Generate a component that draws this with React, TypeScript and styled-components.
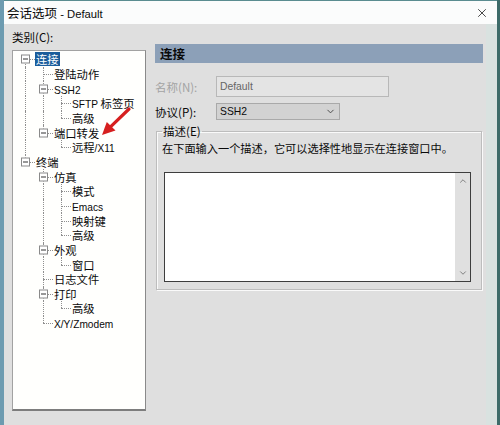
import { FC, ReactNode } from 'react';
import styled, { createGlobalStyle } from 'styled-components';
import { X, ChevronDown, ChevronUp } from 'lucide-react';

const GlobalStyle = createGlobalStyle`
  html, body {
    margin: 0;
    padding: 0;
    background: #dfdfdf;
  }
  body {
    font-family: "Noto Sans CJK SC", "Liberation Sans", sans-serif;
    color: #0a0a0a;
  }
`;

// Latin runs in the original dialog are set in a narrower face than the CJK ones
const Latin = styled.span`
  font-family: "Liberation Sans", Arial, sans-serif;
  font-size: 0.9em;
`;

const mixed = (text: string): ReactNode[] =>
  text
    .split(/([A-Za-z0-9/ \-]+)/)
    .filter(Boolean)
    .map((part, i) => (/^[A-Za-z0-9/ \-]+$/.test(part) ? <Latin key={i}>{part}</Latin> : part));

const Window = styled.div`
  position: relative;
  width: 500px;
  height: 425px;
  box-sizing: border-box;
  display: flex;
  flex-direction: column;
  background: #dfdfdf;
  border-left: 4px solid #6d9bb0;
  border-right: 3px solid #3d6b69;
  overflow: hidden;
`;

const TitleBar = styled.div`
  height: 23px;
  flex: 0 0 23px;
  display: flex;
  align-items: center;
  justify-content: space-between;
  padding: 0 8px 0 3px;
  background: #fbfcfc;
  border-top: 1px solid #5a8c90;
  font-size: 12.5px;
`;

const Main = styled.div`
  flex: 1;
  display: flex;
  gap: 9px;
  padding: 5px 3px 0 8px;
  border-right: 11px solid #d9e2e0;
  min-height: 0;
`;

const LeftColumn = styled.div`
  width: 134px;
  display: flex;
  flex-direction: column;
`;

const FieldLabel = styled.div<{ $disabled?: boolean }>`
  font-size: 11.5px;
  line-height: 16px;
  color: ${({ $disabled }) => ($disabled ? '#a3a3a3' : '#0a0a0a')};
`;

const TreeBox = styled.div`
  margin-top: 5px;
  height: 361px;
  box-sizing: border-box;
  background: #fffffd;
  border: 1px solid #a2a2a2;
  border-bottom: 2px solid #7d7d7d;
  border-right: 1px solid #8a8a8a;
  padding: 1px 0 0 3px;
  font-size: 11.3px;
`;

const TreeRow = styled.div`
  display: flex;
  align-items: center;
  height: 14.67px;
`;

const Cell = styled.span`
  position: relative;
  flex: 0 0 18px;
  align-self: stretch;
`;

const VLine = styled.i<{ $part: 'top' | 'bottom' | 'full' }>`
  position: absolute;
  left: 9px;
  top: ${({ $part }) => ($part === 'bottom' ? '50%' : '0')};
  bottom: ${({ $part }) => ($part === 'top' ? '50%' : '0')};
  border-left: 1px dotted #8f8f8f;
`;

const HLine = styled.i`
  position: absolute;
  left: 9px;
  right: -1px;
  top: 50%;
  border-top: 1px dotted #8f8f8f;
`;

const ExpandBox = styled.i`
  position: absolute;
  left: 5px;
  top: 50%;
  width: 9px;
  height: 9px;
  box-sizing: border-box;
  transform: translateY(-50%);
  background: #fff;
  border: 1px solid #8a8a8a;
  &::after {
    content: '';
    position: absolute;
    left: 1px;
    top: 3px;
    width: 5px;
    height: 1px;
    background: #333;
  }
`;

const NodeLabel = styled.span<{ $selected?: boolean }>`
  display: inline-block;
  height: 14px;
  margin-left: 1px;
  padding: 0 1px;
  line-height: 14px;
  overflow: hidden;
  white-space: nowrap;
  color: ${({ $selected }) => ($selected ? '#fff' : '#0a0a0a')};
  background: ${({ $selected }) => ($selected ? '#1b5d9b' : 'transparent')};
`;

const RightPanel = styled.div`
  width: 328px;
  display: flex;
  flex-direction: column;
  padding-top: 15px;
`;

const PanelHeader = styled.div`
  height: 19px;
  display: flex;
  align-items: center;
  padding-left: 5px;
  background: #8ca0b8;
  font-size: 12.5px;
  font-weight: bold;
`;

const FormRow = styled.div<{ $top: number; $height: number }>`
  display: flex;
  align-items: center;
  margin-top: ${({ $top }) => $top}px;
  height: ${({ $height }) => $height}px;
  > ${FieldLabel} {
    width: 61px;
  }
`;

const TextInput = styled.div`
  width: 173px;
  height: 100%;
  box-sizing: border-box;
  display: flex;
  align-items: center;
  padding-left: 3px;
  background: #e4e4e4;
  border: 1px solid #b8b8b8;
  font-size: 11.5px;
  color: #666;
`;

const Select = styled.div`
  width: 124px;
  height: 100%;
  box-sizing: border-box;
  display: flex;
  align-items: center;
  justify-content: space-between;
  padding: 0 3px 0 3px;
  background: #d2d2d2;
  border: 1px solid #a9a9a9;
  font-size: 11.5px;
  color: #0a0a0a;
`;

const GroupBox = styled.fieldset`
  margin: 4px 1px 0 1px;
  padding: 3px 10px 7px 6px;
  border: 1px solid #bdbdbd;
  box-shadow: inset 1px 1px 0 #fafafa, 1px 1px 0 #fafafa;
  font-size: 11.5px;
`;

const Legend = styled.legend`
  padding: 0 1px;
  margin-left: -1px;
  line-height: 14px;
`;

const Hint = styled.div`
  line-height: 14px;
  font-size: 11.2px;
  white-space: nowrap;
  margin-left: -1px;
`;

const MemoBox = styled.div`
  margin: 17px 0 0 1px;
  height: 110px;
  box-sizing: border-box;
  display: flex;
  background: #fff;
  border: 1px solid #3e3e3e;
`;

const MemoText = styled.div`
  flex: 1;
`;

const ScrollTrack = styled.div`
  width: 15px;
  display: flex;
  flex-direction: column;
  justify-content: space-between;
  align-items: center;
  padding: 3px 0;
  background: #e0e0e0;
  color: #6e6e6e;
`;

const Arrow = styled.svg`
  position: absolute;
  left: 94px;
  top: 104px;
`;

type Node = {
  label: string;
  guides: boolean[];
  last: boolean;
  first?: boolean;
  expandable?: boolean;
  selected?: boolean;
};

const nodes: Node[] = [
  { label: '连接', guides: [], last: false, first: true, expandable: true, selected: true },
  { label: '登陆动作', guides: [true], last: false },
  { label: 'SSH2', guides: [true], last: false, expandable: true },
  { label: 'SFTP 标签页', guides: [true, true], last: false },
  { label: '高级', guides: [true, true], last: true },
  { label: '端口转发', guides: [true], last: true, expandable: true },
  { label: '远程/X11', guides: [true, false], last: true },
  { label: '终端', guides: [], last: true, expandable: true },
  { label: '仿真', guides: [false], last: false, expandable: true },
  { label: '模式', guides: [false, true], last: false },
  { label: 'Emacs', guides: [false, true], last: false },
  { label: '映射键', guides: [false, true], last: false },
  { label: '高级', guides: [false, true], last: true },
  { label: '外观', guides: [false], last: false, expandable: true },
  { label: '窗口', guides: [false, true], last: true },
  { label: '日志文件', guides: [false], last: false },
  { label: '打印', guides: [false], last: false, expandable: true },
  { label: '高级', guides: [false, true], last: true },
  { label: 'X/Y/Zmodem', guides: [false], last: true },
];

const TreeItem: FC<{ node: Node }> = ({ node }) => {
  let part: 'top' | 'bottom' | 'full' = node.last ? 'top' : 'full';
  if (node.first) part = 'bottom';
  return (
    <TreeRow>
      {node.guides.map((g, i) => (
        <Cell key={i}>{g && <VLine $part="full" />}</Cell>
      ))}
      <Cell>
        <VLine $part={part} />
        <HLine />
        {node.expandable && <ExpandBox />}
      </Cell>
      <NodeLabel $selected={node.selected}>{mixed(node.label)}</NodeLabel>
    </TreeRow>
  );
};

const App: FC = () => {
  return (
    <>
      <GlobalStyle />
      <Window>
        <TitleBar>
          <span>{mixed('会话选项 - Default')}</span>
          <X size={14} strokeWidth={1.4} color="#222" />
        </TitleBar>
        <Main>
          <LeftColumn>
            <FieldLabel>类别(C):</FieldLabel>
            <TreeBox>
              {nodes.map((n, i) => (
                <TreeItem key={i} node={n} />
              ))}
            </TreeBox>
          </LeftColumn>
          <RightPanel>
            <PanelHeader>连接</PanelHeader>
            <FormRow $top={13} $height={21}>
              <FieldLabel $disabled>名称(N):</FieldLabel>
              <TextInput>
                <Latin>Default</Latin>
              </TextInput>
            </FormRow>
            <FormRow $top={6} $height={17}>
              <FieldLabel>协议(P):</FieldLabel>
              <Select>
                <Latin>SSH2</Latin>
                <ChevronDown size={11} strokeWidth={2} color="#444" />
              </Select>
            </FormRow>
            <GroupBox>
              <Legend>描述(E)</Legend>
              <Hint>在下面输入一个描述，它可以选择性地显示在连接窗口中。</Hint>
              <MemoBox>
                <MemoText />
                <ScrollTrack>
                  <ChevronUp size={10} strokeWidth={2} />
                  <ChevronDown size={10} strokeWidth={2} />
                </ScrollTrack>
              </MemoBox>
            </GroupBox>
          </RightPanel>
        </Main>
        <Arrow width="36" height="36" viewBox="0 0 36 36">
          <line x1="31" y1="5" x2="13" y2="22.4" stroke="#d61f1f" strokeWidth="3.2" strokeLinecap="round" />
          <polygon points="4,31 17.5,26.6 8.8,18" fill="#d61f1f" />
        </Arrow>
      </Window>
    </>
  );
};

export default App;
